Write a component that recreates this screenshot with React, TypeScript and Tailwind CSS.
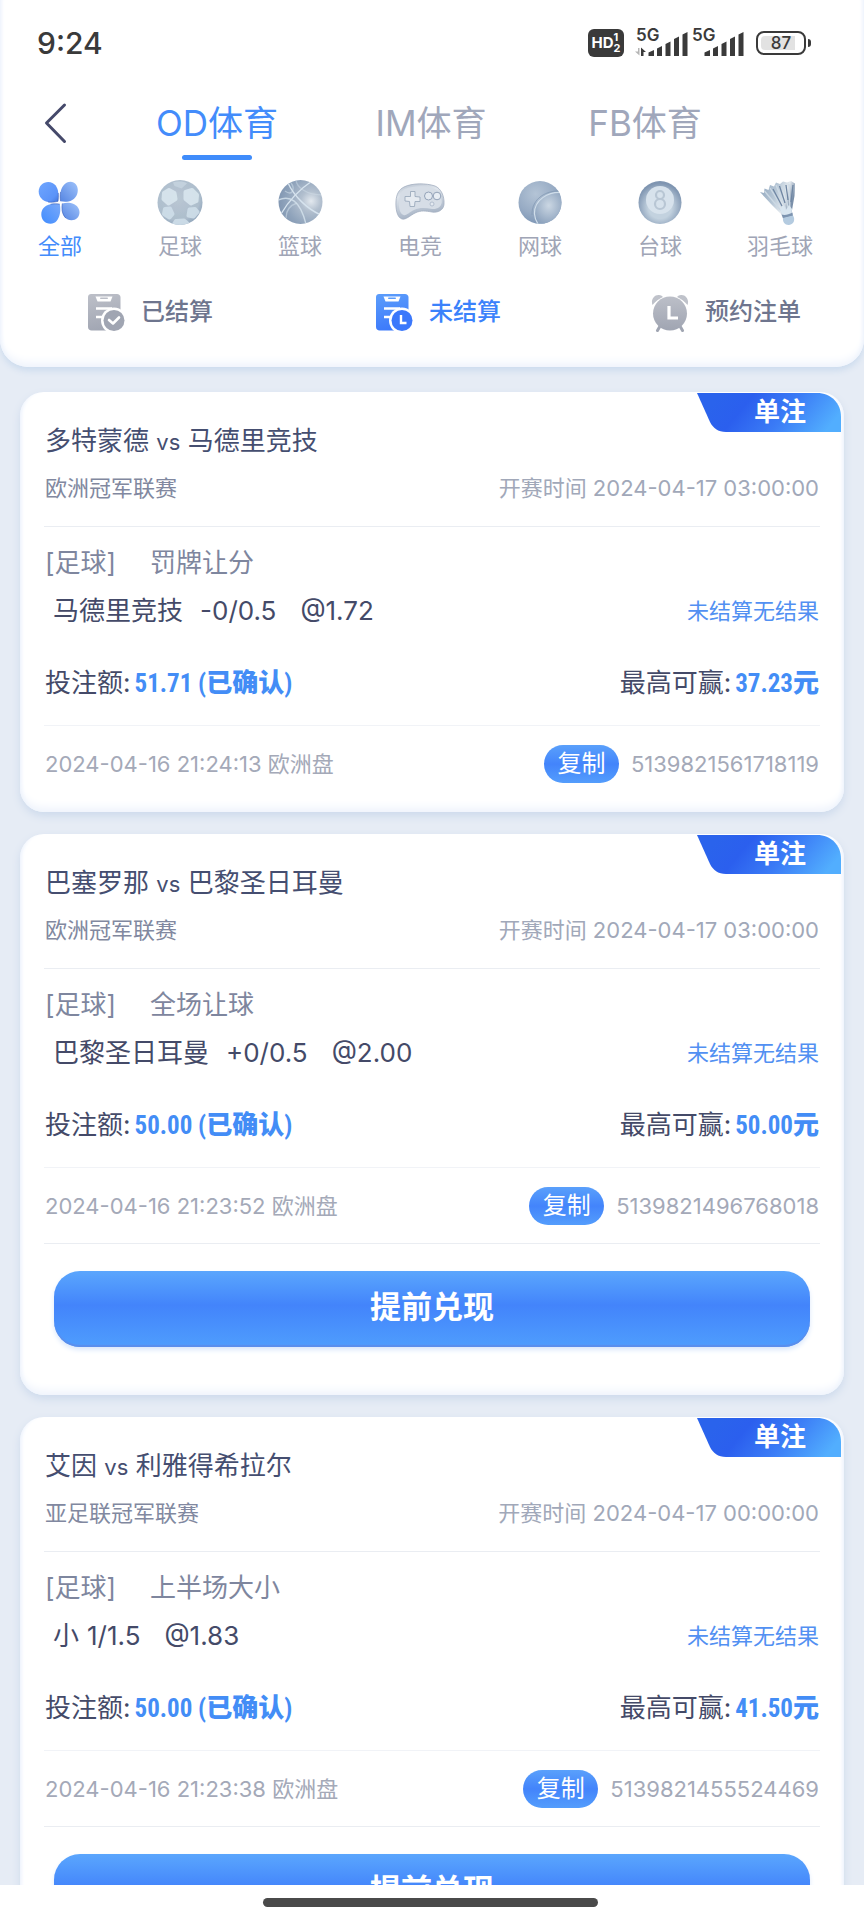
import type React from "react"
import { useState } from "react"

interface Bet {
  id: string
  home: string
  away: string
  league: string
  startTime: string
  sport: string
  market: string
  pick: string
  handicap: string
  odds: string
  stake: string
  maxWin: string
  placedAt: string
  cashOut: boolean
}

const BETS: Bet[] = [
  {
    id: "5139821561718119",
    home: "多特蒙德",
    away: "马德里竞技",
    league: "欧洲冠军联赛",
    startTime: "2024-04-17 03:00:00",
    sport: "足球",
    market: "罚牌让分",
    pick: "马德里竞技",
    handicap: "-0/0.5",
    odds: "1.72",
    stake: "51.71",
    maxWin: "37.23",
    placedAt: "2024-04-16 21:24:13",
    cashOut: false,
  },
  {
    id: "5139821496768018",
    home: "巴塞罗那",
    away: "巴黎圣日耳曼",
    league: "欧洲冠军联赛",
    startTime: "2024-04-17 03:00:00",
    sport: "足球",
    market: "全场让球",
    pick: "巴黎圣日耳曼",
    handicap: "+0/0.5",
    odds: "2.00",
    stake: "50.00",
    maxWin: "50.00",
    placedAt: "2024-04-16 21:23:52",
    cashOut: true,
  },
  {
    id: "5139821455524469",
    home: "艾因",
    away: "利雅得希拉尔",
    league: "亚足联冠军联赛",
    startTime: "2024-04-17 00:00:00",
    sport: "足球",
    market: "上半场大小",
    pick: "小",
    handicap: "1/1.5",
    odds: "1.83",
    stake: "50.00",
    maxWin: "41.50",
    placedAt: "2024-04-16 21:23:38",
    cashOut: true,
  },
]

function CloverIcon() {
  return (
    <svg viewBox="0 0 48 48" className="w-12 h-12">
      <defs>
        <linearGradient id="petal-a" x1="0" y1="0" x2="1" y2="1">
          <stop offset="0" stopColor="#6fa6ff" />
          <stop offset="0.75" stopColor="#5b93f8" />
          <stop offset="1" stopColor="#4274d8" />
        </linearGradient>
        <linearGradient id="petal-b" x1="0" y1="1" x2="1" y2="0">
          <stop offset="0" stopColor="#5585e2" />
          <stop offset="1" stopColor="#9fc3fb" />
        </linearGradient>
        <linearGradient id="petal-c" x1="0" y1="1" x2="1" y2="0">
          <stop offset="0" stopColor="#3f8cff" />
          <stop offset="1" stopColor="#7aa9f9" />
        </linearGradient>
      </defs>
      <path d="M22 23.3C18.500 24.200 15 24.500 12 24C6.500 23 2.700 18.800 2.700 13.500C2.700 8 7 4 12.200 4C18.500 4 21.800 9 22.300 15C22.500 18 22.400 21 22 23.300Z" fill="url(#petal-a)" />
      <path d="M24.600 23.200C24 20 24 17 24.600 14C25.700 8 29.500 3.700 34.500 3.700C39 3.700 41.800 7.500 41.800 12C41.800 18 38 22.500 32.500 23.400C30 23.800 27 23.700 24.600 23.200Z" fill="url(#petal-b)" />
      <path d="M23.800 26.200C24.500 29.500 24.500 33 23.800 36C22.700 41.500 19.500 45.800 14.500 45.800C9 45.800 5.300 41.500 5.300 36.500C5.300 31 9 27 14.500 26.200C17.500 25.700 21 25.600 23.800 26.200Z" fill="url(#petal-c)" />
      <path d="M26.300 25.500C29 24.700 32 24.600 34.500 25C40 26 43.500 29.800 43.500 34.500C43.500 39 40 42.200 35.500 42.200C30 42.200 26.800 38 26.100 32.500C25.800 30 25.900 27.700 26.300 25.500Z" fill="url(#petal-b)" />
      <path d="M22 23.300C18.500 24.200 15 24.500 12 24M22.300 15C22.500 18 22.400 21 22 23.300M23.800 26.200C21 25.600 17.500 25.700 14.500 26.200M24.600 23.200C24 20 24 17 24.600 14M26.300 25.500C25.900 27.700 25.800 30 26.100 32.500C26.800 36 28 38.500 30 40.200" fill="none" stroke="#2d55b4" strokeWidth="0.8" strokeOpacity="0.7" />
    </svg>
  )
}

function FootballIcon() {
  return (
    <svg viewBox="0 0 48 48" className="w-12 h-12">
      <defs>
        <radialGradient id="football" cx="0.45" cy="0.4" r="0.65">
          <stop offset="0" stopColor="#bac7d3" />
          <stop offset="0.75" stopColor="#aebecd" />
          <stop offset="1" stopColor="#8ba1b8" />
        </radialGradient>
        <clipPath id="football-clip">
          <circle cx="24" cy="24.500" r="22.500" />
        </clipPath>
      </defs>
      <circle cx="24" cy="24.500" r="22.500" fill="url(#football)" />
      <g clipPath="url(#football-clip)" fill="#d9e6ee" stroke="#d9e6ee" strokeWidth="4" strokeLinejoin="round" opacity="0.9">
        <path d="M13 12L18.500 15L19.500 21L12.500 25.500L7.500 21L8 15Z" />
        <path d="M29.500 14L36 12L41 17L40.500 23L35 25.500L29.500 21Z" />
        <path d="M9 31L14 30.500L16.500 36L13.500 39.500L8 36Z" fill="#cfdee9" stroke="#cfdee9" />
        <path d="M33.500 31.500L39 31L41.500 34L37.500 38.500L32.500 37.500Z" fill="#cfdee9" stroke="#cfdee9" />
        <path d="M20 43L28 42.500L31 45L18 46Z" fill="#cfdee9" stroke="#cfdee9" />
      </g>
      <path d="M17 4.500C21 3 28 3 31 5.500L25.500 10.500L18.500 8Z" fill="#c3d1dd" />
    </svg>
  )
}

function BasketballIcon() {
  return (
    <svg viewBox="0 0 48 48" className="w-12 h-12">
      <defs>
        <radialGradient id="basketball" cx="0.74" cy="0.48" r="0.75">
          <stop offset="0" stopColor="#e3e9ef" />
          <stop offset="0.3" stopColor="#b3c0cf" />
          <stop offset="0.75" stopColor="#8fa3bb" />
          <stop offset="1" stopColor="#8297b2" />
        </radialGradient>
        <clipPath id="basketball-clip">
          <circle cx="24.500" cy="24" r="22" />
        </clipPath>
      </defs>
      <circle cx="24.500" cy="24" r="22" fill="url(#basketball)" />
      <g clipPath="url(#basketball-clip)" fill="none" stroke="#d6e3ee" strokeWidth="1.4">
        <path d="M12 5C18 18 31 31 45 37" />
        <path d="M36 3C24 11 12 24 5 36" />
        <path d="M2 22C14 17 24 22 30 46" strokeOpacity="0.800" />
        <path d="M20 1C20 9 30 17 47 17" strokeOpacity="0.4" />
        <path d="M9 13C17 19 19 10 15 5" strokeOpacity="0.5" />
        <path d="M10 40C10 32 15 27 21 25" strokeOpacity="0.5" />
      </g>
    </svg>
  )
}

function GamepadIcon() {
  return (
    <svg viewBox="0 0 50 48" className="w-[50px] h-12">
      <defs>
        <linearGradient id="pad" x1="0" y1="0" x2="0.3" y2="1">
          <stop offset="0" stopColor="#b6c0ce" />
          <stop offset="0.35" stopColor="#dfe5ec" />
          <stop offset="1" stopColor="#a5b2c4" />
        </linearGradient>
      </defs>
      <path d="M9 9C17 5 31 5 40 8C46 10.500 49.500 18 49 26C48.700 32 43 35 37 34C31 33 26 32 20 35C15 37.500 11 42 7 41C2 39.500 0.500 31 1 23C1.500 16 4 11.500 9 9Z" fill="url(#pad)" stroke="#a3afc0" strokeWidth="0.8" />
      <path d="M10 11C18 7.500 30 7.500 38 10C44 12 47 18 46.800 24C46.500 29 42 31.500 37 31C31 30 25 29 19 32C14 34.500 11 38 8.500 37C4.500 35.500 3.500 29 4 23C4.500 16.500 6.500 12.500 10 11Z" fill="#d6dde6" />
      <path d="M15.500 13.500H20V18.500L25 19V23.500H20L19.500 28.500H15L14.500 23.500L10 23V18.500H15.500Z" fill="#e6ebf1" stroke="#9caabc" strokeWidth="0.9" strokeLinejoin="round" />
      <circle cx="33.500" cy="18" r="4" fill="#e3e9f0" stroke="#93a2b8" strokeWidth="1" />
      <circle cx="42" cy="18" r="3.800" fill="#e9eef4" stroke="#93a2b8" strokeWidth="1" />
      <circle cx="37" cy="26" r="2" fill="#e3e9f0" stroke="#a7b4c5" strokeWidth="0.8" />
    </svg>
  )
}

function TennisIcon() {
  return (
    <svg viewBox="0 0 48 48" className="w-12 h-12">
      <defs>
        <radialGradient id="tennis" cx="0.4" cy="0.3" r="0.75">
          <stop offset="0" stopColor="#b4c4d6" />
          <stop offset="0.6" stopColor="#97abc4" />
          <stop offset="1" stopColor="#7b94b4" />
        </radialGradient>
        <radialGradient id="tennis-front" cx="0.5" cy="0.4" r="0.6">
          <stop offset="0" stopColor="#cbd7e3" />
          <stop offset="1" stopColor="#8ca2bd" />
        </radialGradient>
        <clipPath id="tennis-clip">
          <circle cx="24" cy="24.500" r="21.500" />
        </clipPath>
      </defs>
      <circle cx="24" cy="24.500" r="21.500" fill="url(#tennis)" />
      <g clipPath="url(#tennis-clip)">
        <path d="M46 14.500C32 13.500 18 22 18.500 36C18.700 40 20 43 22 46L47 47Z" fill="url(#tennis-front)" stroke="#d0deea" strokeWidth="1.2" />
        <path d="M45 13C31 12 15.500 20 16 37" fill="none" stroke="#7f96b2" strokeWidth="0.7" />
      </g>
    </svg>
  )
}

function PoolIcon() {
  return (
    <svg viewBox="0 0 48 48" className="w-12 h-12">
      <defs>
        <radialGradient id="pool" cx="0.5" cy="0.6" r="0.55">
          <stop offset="0.5" stopColor="#c3d2df" />
          <stop offset="1" stopColor="#7f95b1" />
        </radialGradient>
      </defs>
      <circle cx="24" cy="24.500" r="21.500" fill="url(#pool)" />
      <circle cx="24" cy="22" r="14" fill="#d7e2ec" />
      <circle cx="24" cy="17" r="4" fill="none" stroke="#b8c6d4" strokeWidth="2.2" />
      <circle cx="24" cy="26" r="5" fill="none" stroke="#b8c6d4" strokeWidth="2.2" />
    </svg>
  )
}

function ShuttlecockIcon() {
  return (
    <svg viewBox="0 0 48 48" className="w-12 h-12">
      <defs>
        <linearGradient id="feather" x1="0" y1="0" x2="1" y2="0.3">
          <stop offset="0" stopColor="#8fa5bd" />
          <stop offset="0.5" stopColor="#b7c7d6" />
          <stop offset="0.8" stopColor="#e3e9ee" />
          <stop offset="1" stopColor="#7b90aa" />
        </linearGradient>
      </defs>
      <path d="M4 14L8 15L8.500 10.500L12.500 12L14 7L18 8.500L20 4.500L24 6L27 3.500L31 4.500L35 3L39 5.500L38.500 18L35.500 35L26 37L15 26Z" fill="url(#feather)" />
      <path d="M8.500 13L27 35M14 10L29 34M20 7L31 34M27 6L33 34M33 6L34 33" stroke="#ccd9e4" strokeWidth="1.3" fill="none" />
      <path d="M17 11L26 28M23.500 8L29 25M30 7L32 22M37 7L35 24" stroke="#6f86a3" strokeWidth="1.3" fill="none" />
      <path d="M24 31L28 27L30 32L33 27L36 31L35.500 37L27 38.500Z" fill="#d9e6f0" />
      <path d="M25.500 36.500C29 37.500 32.500 36.500 36.500 34.500L37 38L27 40.500Z" fill="#7d94b0" />
      <path d="M27 40L37 37.500C39.500 41 38 46.500 33 47C29 47.300 26.500 44 27 40Z" fill="#b4cbe0" />
    </svg>
  )
}

function StatusIcon({ name, from, to, clock }: { name: string; from: string; to: string; clock?: boolean }) {
  return (
    <svg viewBox="0 0 38 40" className="w-[38px] h-10">
      <defs>
        <linearGradient id={name} x1="0.4" y1="0" x2="0.6" y2="1">
          <stop offset="0" stopColor={from} />
          <stop offset="1" stopColor={to} />
        </linearGradient>
      </defs>
      <path d="M4 2H30C32 2 33.500 3.500 33.500 5.500V34C33.500 36.500 32 38.500 29.500 38.500H4.500C2.500 38.500 1 37 1 35V5C1 3 2.500 2 4 2Z" fill={`url(#${name})`} />
      <path d="M8.500 4.500H25.500L23.500 9.500H10.500Z" fill="#fff" />
      <rect x="13" y="5.500" width="8" height="1.600" rx="0.8" fill={from} />
      <path d="M9 16.500H25M9 25H15.500" stroke="#fff" strokeWidth="2.600" />
      <circle cx="27" cy="28.500" r="13" fill="#fff" />
      <circle cx="27" cy="28.500" r="10.500" fill={to} />
      {clock ? (
        <path d="M26 23V31H31.500" fill="none" stroke="#fff" strokeWidth="2.4" />
      ) : (
        <path d="M22 28L26 31.500L32 25.500" fill="none" stroke="#fff" strokeWidth="2.6" strokeLinecap="round" strokeLinejoin="round" />
      )}
    </svg>
  )
}

function AlarmIcon() {
  return (
    <svg viewBox="0 0 38 40" className="w-[38px] h-10">
      <defs>
        <linearGradient id="alarm" x1="0" y1="0" x2="0" y2="1">
          <stop offset="0" stopColor="#bcbfc8" />
          <stop offset="1" stopColor="#a0a5b2" />
        </linearGradient>
      </defs>
      <path d="M1.500 13C-0.500 8 3 2.500 8 3C9.500 3 11 3.800 12 5C8 6.500 4.500 9.500 1.500 13ZM36.500 13C38.500 8 35 2.500 30 3C28.500 3 27 3.800 26 5C30 6.500 33.500 9.500 36.500 13Z" fill="#bfc2ca" />
      <path d="M8.500 35L6.500 38.500M29.500 35L31.500 38.500" stroke="#a0a5b2" strokeWidth="3" strokeLinecap="round" />
      <circle cx="19" cy="21.500" r="17" fill="url(#alarm)" />
      <path d="M18 14V26H27" fill="none" stroke="#fff" strokeWidth="3.2" />
    </svg>
  )
}

function SignalIcon({ data }: { data?: boolean }) {
  return (
    <div className="relative w-[52px] h-[28px]">
      <span className="absolute left-0 -top-1 text-[17px] leading-5 font-semibold">5G</span>
      <svg viewBox="0 0 52 28" className="w-[52px] h-[28px] overflow-visible" fill="#3a3a3a">
        {data && (
          <>
            <path d="M3.500 19V26.500L-1 22.500H2V19Z" fill="#b5b5b5" />
            <path d="M5 27V18.500L10 23H7.500V27Z" />
          </>
        )}
        <path d="M12.500 27V23.500L18 21V27ZM21 27V19.500L26 17V27ZM29.500 27V15L34.500 12.500V27ZM38 27V10L43 7.500V27ZM46.500 27V5.500L51.500 3V27Z" />
      </svg>
    </div>
  )
}

const SPORTS: { label: string; icon: React.ReactNode }[] = [
  { label: "全部", icon: <CloverIcon /> },
  { label: "足球", icon: <FootballIcon /> },
  { label: "篮球", icon: <BasketballIcon /> },
  { label: "电竞", icon: <GamepadIcon /> },
  { label: "网球", icon: <TennisIcon /> },
  { label: "台球", icon: <PoolIcon /> },
  { label: "羽毛球", icon: <ShuttlecockIcon /> },
]

const FILTERS: { label: string; icon: React.ReactNode }[] = [
  { label: "已结算", icon: <StatusIcon name="settled" from="#bbbec7" to="#a0a5b2" /> },
  { label: "未结算", icon: <StatusIcon name="unsettled" from="#5a9bfb" to="#3b78fb" clock /> },
  { label: "预约注单", icon: <AlarmIcon /> },
]

const TABS = ["OD体育", "IM体育", "FB体育"]

function StatusBar() {
  return (
    <div className="flex items-center justify-between h-[86px] pl-[37px] pr-[53px] text-[#3a3a3a]">
      <span className="text-[30px] leading-9 font-medium">9:24</span>
      <div className="flex items-center">
        <div className="flex items-center justify-center w-9 h-7 rounded-md bg-[#3a3a3a] text-white font-bold">
          <span className="text-[15px] leading-4">HD</span>
          <span className="flex flex-col text-[11px] leading-[11px]">
            <span>1</span>
            <span>2</span>
          </span>
        </div>
        <div className="flex ml-3 gap-1">
          <SignalIcon data />
          <SignalIcon />
        </div>
        <div className="ml-3 w-[50px] h-6 p-[3px] rounded-lg border-2 border-[#3a3a3a]">
          <div className="flex items-center justify-center h-full rounded-sm bg-linear-to-r from-[#e2e2e2] from-85% to-white to-85% text-[17px] leading-4 font-medium">
            87
          </div>
        </div>
        <div className="ml-0.5 w-[3px] h-2 rounded-r-sm bg-[#3a3a3a]" />
      </div>
    </div>
  )
}

function BetCard({ bet }: { bet: Bet }) {
  return (
    <article className="relative px-6 pt-[31px] rounded-3xl bg-white shadow-[inset_0_-8px_10px_-4px_#eef3fc,inset_5px_0_4px_-4px_#e9f0fc,inset_-5px_0_4px_-4px_#e9f0fc,0_4px_8px_#cddaec]">
      {/* Bet type ribbon */}
      <div className="absolute top-0 right-[3px] w-36 h-10">
        <svg viewBox="0 0 144 40" className="absolute inset-0 w-36 h-10">
          <defs>
            <linearGradient id={`ribbon-${bet.id}`} x1="0.1" y1="0.3" x2="1" y2="0.5">
              <stop offset="0" stopColor="#2a63ec" />
              <stop offset="0.25" stopColor="#2b5fee" />
              <stop offset="0.6" stopColor="#3b7cf6" />
              <stop offset="1" stopColor="#52aefe" />
            </linearGradient>
          </defs>
          <path d="M0 1H120C134 1 144 11 144 25V40H29C21 40 16 36 13 30Z" fill={`url(#ribbon-${bet.id})`} />
        </svg>
        <span className="relative block pl-[57px] text-[26px] leading-10 font-bold text-white">单注</span>
      </div>

      <h2 className="px-px text-[26px] leading-9 text-[#454e70]">
        {bet.home} <span className="text-[22px] leading-none">vs</span> {bet.away}
      </h2>
      <div className="flex justify-between mt-[15px] px-px pb-6 border-b border-[#eaedf2] text-[22px] leading-7">
        <span className="text-[#8188a0]">{bet.league}</span>
        <span className="text-[#a1a8b9]">开赛时间 {bet.startTime}</span>
      </div>

      <div className="flex gap-[34px] mt-[18px] px-px text-[26px] leading-9 text-[#7e869e]">
        <span>[{bet.sport}]</span>
        <span>{bet.market}</span>
      </div>
      <div className="flex items-center mt-3 pl-[9px] pr-px text-[26px] leading-9 text-[#444a68]">
        <span>{bet.pick}</span>
        <span className={bet.handicap.match(/^[+-]/) ? "ml-[17px]" : "ml-2"}>{bet.handicap}</span>
        <span className="ml-6">@{bet.odds}</span>
        <span className="ml-auto text-[22px] text-[#5290f2]">未结算无结果</span>
      </div>

      <div className="flex justify-between mt-9 px-px pb-6 border-b border-[#f1f3f7] text-[26px] leading-9 text-[#444a68]">
        <div className="flex items-center gap-1 h-9">
          <span>投注额:</span>
          <span className="font-black text-[#438df6]">
            <span className="font-['Roboto_Condensed',Roboto,sans-serif] text-[25px] leading-none font-bold">{bet.stake} (</span>
            已确认
            <span className="font-['Roboto_Condensed',Roboto,sans-serif] text-[25px] leading-none font-bold">)</span>
          </span>
        </div>
        <div className="flex items-center gap-1 h-9">
          <span>最高可赢:</span>
          <span className="font-black text-[#438df6]">
            <span className="font-['Roboto_Condensed',Roboto,sans-serif] text-[25px] leading-none font-bold">{bet.maxWin}</span>元
          </span>
        </div>
      </div>

      <div className="flex items-center mt-[19px] px-px text-[22px] leading-7 text-[#a4a9b8]">
        <span>{bet.placedAt} 欧洲盘</span>
        <button className="ml-auto mr-3 w-[75px] h-[38px] rounded-full bg-linear-to-b from-[#5aa0fb] via-[#4384fb] to-[#549dfc] text-2xl text-white">
          复制
        </button>
        <span>{bet.id}</span>
      </div>

      {bet.cashOut ? (
        <div className="mt-[18px] px-[10px] pt-[27px] pb-12 border-t border-[#eaedf2]">
          <button className="w-full h-[76px] pb-1 rounded-[26px] bg-linear-to-b from-[#5ba6fd] via-[#4384fb] via-45% to-[#4f9dfd] shadow-[inset_0_-2px_1px_#5b8eec,0_3px_5px_#dbe8fb] text-[31px] font-bold text-white">
            提前兑现
          </button>
        </div>
      ) : (
        <div className="h-[29px]" />
      )}
    </article>
  )
}

export default function App() {
  const [tab, setTab] = useState("OD体育")
  const [sport, setSport] = useState("全部")
  const [filter, setFilter] = useState("未结算")

  return (
    <div className="flex flex-col h-screen overflow-hidden bg-[#e6ecf5] font-[Inter,'Noto_Sans_CJK_SC',sans-serif]">
      <header className="shrink-0 relative rounded-b-[28px] bg-white pb-[35px] shadow-[inset_0_-8px_10px_-4px_#eef3fc,inset_5px_0_4px_-4px_#e9f0fc,inset_-5px_0_4px_-4px_#e9f0fc,0_4px_6px_#cddcee]">
        <StatusBar />

        {/* Provider tabs */}
        <nav className="flex h-[74px] pl-11 pr-28">
          <button aria-label="返回" className="w-[66px]">
            <svg viewBox="0 0 24 42" className="w-6 h-[42px]" fill="none" stroke="#45496a" strokeWidth="3" strokeLinecap="round" strokeLinejoin="round">
              <path d="M20.500 3L2.500 21L20.500 39.500" />
            </svg>
          </button>
          <div className="grid grid-cols-3 flex-1">
            {TABS.map((name) => (
              <button
                key={name}
                onClick={() => setTab(name)}
                className={`relative text-[35px] ${tab === name ? "text-[#438cfb]" : "text-[#a0a7bb]"}`}
              >
                {name}
                {tab === name && (
                  <span className="absolute bottom-0 left-1/2 -translate-x-1/2 w-[70px] h-[5px] rounded-full bg-[#3f8cfb]" />
                )}
              </button>
            ))}
          </div>
        </nav>

        {/* Sports */}
        <div className="grid grid-cols-7 pt-[18px] pr-6">
          {SPORTS.map((item) => (
            <button
              key={item.label}
              onClick={() => setSport(item.label)}
              className={`flex flex-col items-center gap-1.5 text-[22px] leading-7 ${
                sport === item.label ? "text-[#438cfb]" : "text-[#a0a5b6]"
              }`}
            >
              {item.icon}
              <span>{item.label}</span>
            </button>
          ))}
        </div>

        {/* Settlement filter */}
        <div className="grid grid-cols-3 mt-8">
          {FILTERS.map((item) => (
            <button
              key={item.label}
              onClick={() => setFilter(item.label)}
              className={`flex items-center justify-center gap-4 h-10 pl-3 text-2xl font-medium ${
                filter === item.label ? "text-[#3b82fb]" : "text-[#6e758e]"
              }`}
            >
              {item.icon}
              <span>{item.label}</span>
            </button>
          ))}
        </div>
      </header>

      <main className="flex-1 min-h-0 overflow-hidden flex flex-col gap-[22px] px-5 pt-[25px]">
        {BETS.map((bet) => (
          <BetCard key={bet.id} bet={bet} />
        ))}
      </main>

      <footer className="shrink-0 relative flex justify-center h-[35px] pt-[13px] pr-1 bg-white">
        <div className="w-[335px] h-[9px] rounded-full bg-[#4a4a4a]" />
      </footer>
    </div>
  )
}
